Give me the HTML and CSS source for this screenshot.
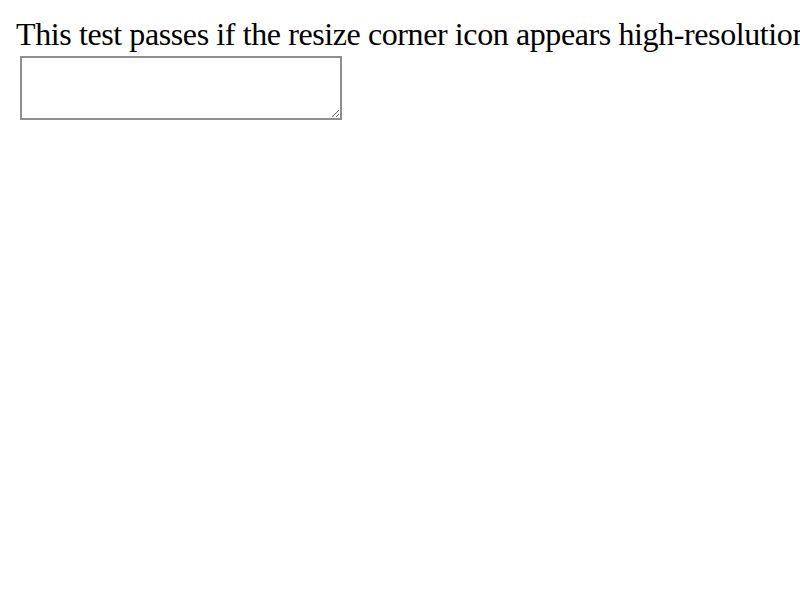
FILE: index.html
```html
<!DOCTYPE html>
<html>
<head>
<link rel="stylesheet" href="styles.css">
</head>
<body class="page">
<div class="note">This test passes if the resize corner icon appears high-resolution.</div>
<textarea class="box"></textarea>
</body>
</html>
```
FILE: styles.css
```css
.page {
  margin: 0;
  padding: 16px;
  font-family: "Liberation Serif", serif;
  font-size: 32px;
}
.note {
  white-space: nowrap;
  line-height: 37px;
  letter-spacing: -0.4px;
}
.box {
  display: block;
  box-sizing: border-box;
  margin: 3px 4px 2px;
  width: 322px;
  height: 64px;
  border: 2px solid #8f8f8f;
  padding: 4px;
  font-size: 26px;
}
```
